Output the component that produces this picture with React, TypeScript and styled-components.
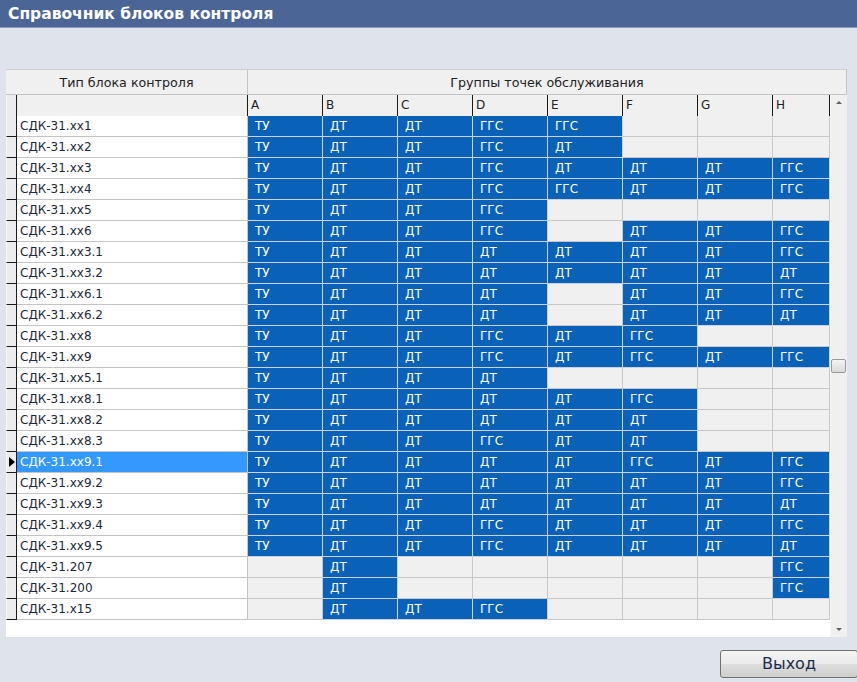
import React from "react";
import styled, { createGlobalStyle } from "styled-components";

const Global = createGlobalStyle`
  html, body { margin: 0; padding: 0; }
  body {
    background: #dfe4ec;
    font-family: "DejaVu Sans", Verdana, sans-serif;
    width: 857px;
    height: 682px;
    overflow: hidden;
  }
`;

const Page = styled.div`
  display: flex;
  flex-direction: column;
  width: 857px;
  height: 682px;
`;

const TitleBar = styled.div`
  height: 27px;
  background: #4b6597;
  border-bottom: 1px solid #8d9cbc;
  color: #ffffff;
  font-weight: bold;
  font-size: 15.5px;
  line-height: 28px;
  padding-left: 8px;
  white-space: nowrap;
`;

const Table = styled.div`
  margin: 41px 0 0 6px;
  width: 841px;
  display: flex;
  flex-direction: column;
  background: #ffffff;
`;

const TopHeader = styled.div`
  display: grid;
  grid-template-columns: 242px 599px;
  height: 26px;
`;

const TopHeadCell = styled.div`
  box-sizing: border-box;
  background: #f0f0f0;
  border-top: 1px solid #cfcfcf;
  border-right: 1px solid #c4c4c4;
  border-bottom: 1px solid #c4c4c4;
  font-size: 12.7px;
  color: #222;
  display: flex;
  align-items: center;
  justify-content: center;
`;

const Body = styled.div`
  display: flex;
`;

const Rows = styled.div`
  display: flex;
  flex-direction: column;
  width: 824px;
`;

const Row = styled.div`
  display: grid;
  grid-template-columns: 11px 231px repeat(7, 75px) 57px;
  height: 21px;
`;

const Filler = styled.div`
  height: 17px;
  background: #ffffff;
`;

const ColHead = styled.div`
  box-sizing: border-box;
  background: #f0f0f0;
  border-right: 1px solid #1a1a1a;
  border-bottom: 1px solid #1a1a1a;
  font-size: 12px;
  color: #222;
  padding-left: 3px;
  line-height: 21px;
`;

const RowHead = styled.div`
  box-sizing: border-box;
  background: #ececec;
  border-left: 1px solid #f8f8f8;
  border-right: 1px solid #1a1a1a;
  border-bottom: 1px solid #1a1a1a;
  position: relative;
`;

const Marker = styled.span`
  position: absolute;
  left: 2px;
  top: 5px;
  width: 0;
  height: 0;
  border-top: 5px solid transparent;
  border-bottom: 5px solid transparent;
  border-left: 6px solid #000;
`;

const NameCell = styled.div<{ $sel?: boolean }>`
  box-sizing: border-box;
  background: ${(p) => (p.$sel ? "#3399ff" : "#ffffff")};
  color: ${(p) => (p.$sel ? "#ffffff" : "#1e2838")};
  border-right: 1px solid #c4c4c4;
  border-bottom: 1px solid #c4c4c4;
  font-size: 12px;
  line-height: 20px;
  padding-left: 3px;
  white-space: nowrap;
`;

const ValCell = styled.div<{ $on: boolean }>`
  box-sizing: border-box;
  background: ${(p) => (p.$on ? "#0a61b8" : "#f0f0f0")};
  color: #ffffff;
  border-right: 1px solid ${(p) => (p.$on ? "#c8d2e0" : "#c8c8c8")};
  border-bottom: 1px solid ${(p) => (p.$on ? "#c8d2e0" : "#c8c8c8")};
  font-size: 12px;
  line-height: 20px;
  padding-left: 7px;
`;

const ScrollBar = styled.div`
  width: 17px;
  background: #f0f0f0;
  display: flex;
  flex-direction: column;
  justify-content: space-between;
  align-items: center;
  position: relative;
  border-left: 1px solid #f6f6f6;
  box-sizing: border-box;
`;

const Arrow = styled.span<{ $down?: boolean }>`
  width: 0;
  height: 0;
  margin: 6px 0;
  border-left: 3px solid transparent;
  border-right: 3px solid transparent;
  ${(p) =>
    p.$down
      ? "border-top: 3px solid #606060;"
      : "border-bottom: 3px solid #606060;"}
`;

const Thumb = styled.div`
  position: absolute;
  left: 0;
  top: 264px;
  width: 15px;
  height: 14px;
  box-sizing: border-box;
  border: 1px solid #9a9a9a;
  border-radius: 2px;
  background: linear-gradient(#f4f4f4, #dadada);
`;

const Footer = styled.div`
  display: flex;
  justify-content: flex-end;
  margin-top: 13px;
`;

const Button = styled.button`
  width: 138px;
  height: 28px;
  box-sizing: border-box;
  border: 1px solid #707070;
  border-radius: 3px;
  background: linear-gradient(#f4f4f4 0%, #ebebeb 50%, #dddddd 51%, #cfcfcf 100%);
  font-family: "DejaVu Sans", Verdana, sans-serif;
  font-size: 16px;
  color: #1c2a4a;
  padding: 0 0 2px 0;
  margin-right: -1px;
`;

type R = { name: string; v: string[] };

const data: R[] = [
  { name: "СДК-31.xx1", v: ["ТУ", "ДТ", "ДТ", "ГГС", "ГГС", "", "", ""] },
  { name: "СДК-31.xx2", v: ["ТУ", "ДТ", "ДТ", "ГГС", "ДТ", "", "", ""] },
  { name: "СДК-31.xx3", v: ["ТУ", "ДТ", "ДТ", "ГГС", "ДТ", "ДТ", "ДТ", "ГГС"] },
  { name: "СДК-31.xx4", v: ["ТУ", "ДТ", "ДТ", "ГГС", "ГГС", "ДТ", "ДТ", "ГГС"] },
  { name: "СДК-31.xx5", v: ["ТУ", "ДТ", "ДТ", "ГГС", "", "", "", ""] },
  { name: "СДК-31.xx6", v: ["ТУ", "ДТ", "ДТ", "ГГС", "", "ДТ", "ДТ", "ГГС"] },
  { name: "СДК-31.xx3.1", v: ["ТУ", "ДТ", "ДТ", "ДТ", "ДТ", "ДТ", "ДТ", "ГГС"] },
  { name: "СДК-31.xx3.2", v: ["ТУ", "ДТ", "ДТ", "ДТ", "ДТ", "ДТ", "ДТ", "ДТ"] },
  { name: "СДК-31.xx6.1", v: ["ТУ", "ДТ", "ДТ", "ДТ", "", "ДТ", "ДТ", "ГГС"] },
  { name: "СДК-31.xx6.2", v: ["ТУ", "ДТ", "ДТ", "ДТ", "", "ДТ", "ДТ", "ДТ"] },
  { name: "СДК-31.xx8", v: ["ТУ", "ДТ", "ДТ", "ГГС", "ДТ", "ГГС", "", ""] },
  { name: "СДК-31.xx9", v: ["ТУ", "ДТ", "ДТ", "ГГС", "ДТ", "ГГС", "ДТ", "ГГС"] },
  { name: "СДК-31.xx5.1", v: ["ТУ", "ДТ", "ДТ", "ДТ", "", "", "", ""] },
  { name: "СДК-31.xx8.1", v: ["ТУ", "ДТ", "ДТ", "ДТ", "ДТ", "ГГС", "", ""] },
  { name: "СДК-31.xx8.2", v: ["ТУ", "ДТ", "ДТ", "ДТ", "ДТ", "ДТ", "", ""] },
  { name: "СДК-31.xx8.3", v: ["ТУ", "ДТ", "ДТ", "ГГС", "ДТ", "ДТ", "", ""] },
  { name: "СДК-31.xx9.1", v: ["ТУ", "ДТ", "ДТ", "ДТ", "ДТ", "ГГС", "ДТ", "ГГС"] },
  { name: "СДК-31.xx9.2", v: ["ТУ", "ДТ", "ДТ", "ДТ", "ДТ", "ДТ", "ДТ", "ГГС"] },
  { name: "СДК-31.xx9.3", v: ["ТУ", "ДТ", "ДТ", "ДТ", "ДТ", "ДТ", "ДТ", "ДТ"] },
  { name: "СДК-31.xx9.4", v: ["ТУ", "ДТ", "ДТ", "ГГС", "ДТ", "ДТ", "ДТ", "ГГС"] },
  { name: "СДК-31.xx9.5", v: ["ТУ", "ДТ", "ДТ", "ГГС", "ДТ", "ДТ", "ДТ", "ДТ"] },
  { name: "СДК-31.207", v: ["", "ДТ", "", "", "", "", "", "ГГС"] },
  { name: "СДК-31.200", v: ["", "ДТ", "", "", "", "", "", "ГГС"] },
  { name: "СДК-31.x15", v: ["", "ДТ", "ДТ", "ГГС", "", "", "", ""] },
];

const letters = ["A", "B", "C", "D", "E", "F", "G", "H"];
const SELECTED = 16;

export default function App() {
  return (
    <Page>
      <Global />
      <TitleBar>Справочник блоков контроля</TitleBar>
      <Table>
        <TopHeader>
          <TopHeadCell>Тип блока контроля</TopHeadCell>
          <TopHeadCell>Группы точек обслуживания</TopHeadCell>
        </TopHeader>
        <Body>
          <Rows>
            <Row>
              <RowHead />
              <ColHead />
              {letters.map((l) => (
                <ColHead key={l}>{l}</ColHead>
              ))}
            </Row>
            {data.map((r, i) => (
              <Row key={r.name}>
                <RowHead>{i === SELECTED && <Marker />}</RowHead>
                <NameCell $sel={i === SELECTED}>{r.name}</NameCell>
                {r.v.map((v, j) => (
                  <ValCell key={j} $on={v !== ""}>
                    {v}
                  </ValCell>
                ))}
              </Row>
            ))}
            <Filler />
          </Rows>
          <ScrollBar>
            <Arrow />
            <Thumb />
            <Arrow $down />
          </ScrollBar>
        </Body>
      </Table>
      <Footer>
        <Button>Выход</Button>
      </Footer>
    </Page>
  );
}
